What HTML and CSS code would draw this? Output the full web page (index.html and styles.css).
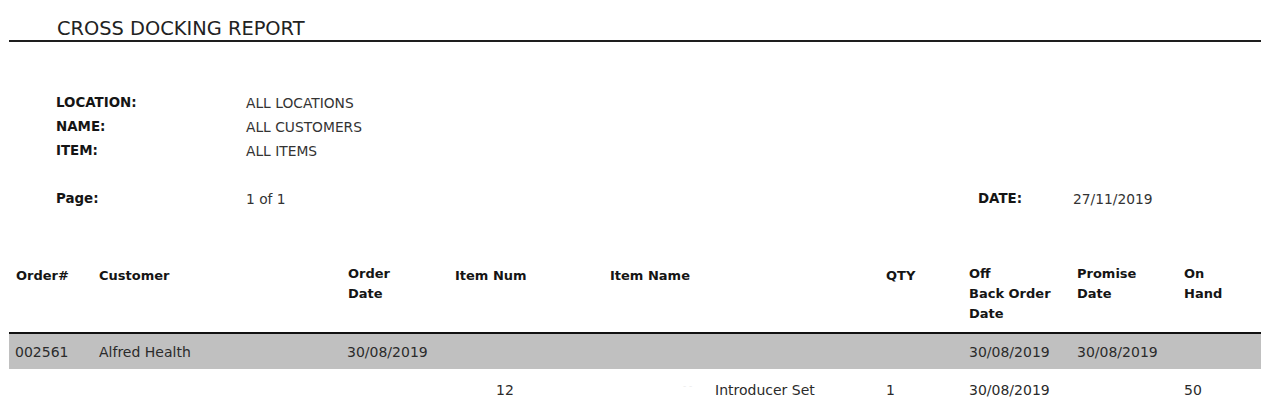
FILE: index.html
```html
<!DOCTYPE html>
<html>
<head>
<meta charset="utf-8">
<link rel="stylesheet" href="styles.css">
</head>
<body>
<div class="page">
  <div class="title">CROSS DOCKING REPORT</div>

  <div class="info">
    <div class="info-row"><span class="label">LOCATION:</span><span class="value">ALL LOCATIONS</span></div>
    <div class="info-row"><span class="label">NAME:</span><span class="value">ALL CUSTOMERS</span></div>
    <div class="info-row"><span class="label">ITEM:</span><span class="value">ALL ITEMS</span></div>
    <div class="info-row page-row">
      <span class="label">Page:</span><span class="value grow">1 of 1</span>
      <span class="label date-label">DATE:</span><span class="value">27/11/2019</span>
    </div>
  </div>

  <div class="table">
    <div class="row head">
      <div class="cell single">Order#</div>
      <div class="cell single">Customer</div>
      <div class="cell">Order<br>Date</div>
      <div class="cell single">Item Num</div>
      <div class="cell single">Item Name</div>
      <div class="cell single">QTY</div>
      <div class="cell">Off<br>Back Order<br>Date</div>
      <div class="cell">Promise<br>Date</div>
      <div class="cell">On<br>Hand</div>
    </div>
    <div class="row order">
      <div class="cell shift">002561</div>
      <div class="cell">Alfred Health</div>
      <div class="cell shift">30/08/2019</div>
      <div class="cell"></div>
      <div class="cell"></div>
      <div class="cell"></div>
      <div class="cell">30/08/2019</div>
      <div class="cell">30/08/2019</div>
      <div class="cell"></div>
    </div>
    <div class="row line">
      <div class="cell"></div>
      <div class="cell"></div>
      <div class="cell"></div>
      <div class="cell num">12</div>
      <div class="cell name"><span class="redacted">- -</span>Introducer Set</div>
      <div class="cell">1</div>
      <div class="cell">30/08/2019</div>
      <div class="cell"></div>
      <div class="cell">50</div>
    </div>
  </div>
</div>
</body>
</html>
```

FILE: styles.css
```css
html, body {
  margin: 0;
  padding: 0;
  background: #ffffff;
}

body {
  font-family: "DejaVu Sans", "Noto Sans", sans-serif;
  color: #2b2b2b;
  overflow: hidden;
}

.page {
  padding-left: 9px;
}

.title {
  padding: 18px 0 0 48px;
  line-height: 22px;
  font-size: 19.4px;
  color: #222222;
  border-bottom: 2px solid #1e1e1e;
}

.info {
  margin-top: 49px;
  padding-left: 47px;
}

.info-row {
  display: flex;
  line-height: 24px;
  font-size: 13.8px;
}

.label {
  width: 190px;
  flex: none;
  font-weight: bold;
  font-size: 13.4px;
  color: #151515;
}

.value {
  color: #333333;
}

.page-row {
  margin-top: 24px;
}

.grow {
  flex: 1;
}

.date-label {
  width: 95px;
}

.page-row .value:last-child {
  width: 188px;
}

.table {
  margin-top: 53px;
}

.row {
  display: grid;
  grid-template-columns: 83px 249px 107px 155px 276px 83px 108px 107px 1fr;
  padding-left: 7px;
}

.head {
  font-weight: bold;
  font-size: 13px;
  line-height: 20px;
  color: #151515;
  padding-bottom: 8px;
  border-bottom: 2px solid #111111;
}

.head .single {
  padding-top: 2px;
}

.order {
  background: #c0c0c0;
  font-size: 14px;
  line-height: 31px;
  padding-top: 3px;
  height: 32px;
}

.line {
  font-size: 14px;
  line-height: 30px;
  padding-top: 6px;
}

.cell {
  white-space: nowrap;
}

.shift {
  margin-left: -1px;
}

.num {
  padding-left: 41px;
}

.name {
  padding-left: 73px;
}

.redacted {
  display: inline-block;
  width: 32px;
  color: #ececec;
  font-size: 9px;
  vertical-align: top;
  line-height: 22px;
}
```
